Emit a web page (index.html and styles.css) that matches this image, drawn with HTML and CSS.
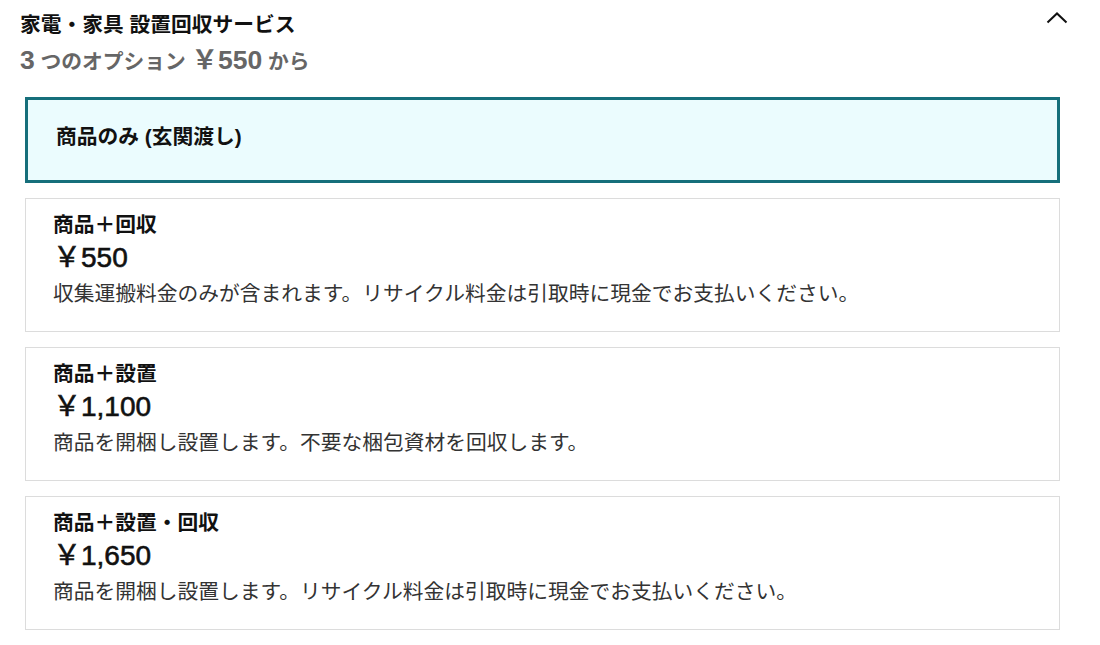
FILE: index.html
```html
<!DOCTYPE html>
<html lang="ja">
<head>
<meta charset="utf-8">
<link rel="stylesheet" href="styles.css">
</head>
<body>
<div class="panel">
  <div class="header">
    <div class="header-text">
      <div class="title">家電・家具 設置回収サービス</div>
      <div class="subtitle"><span class="num">3</span> つのオプション <span class="num">￥550</span> から</div>
    </div>
    <svg class="chevron" width="22" height="12" viewBox="0 0 22 12"><polyline points="1.5,10.5 11,1.5 20.5,10.5" fill="none" stroke="#111" stroke-width="2"/></svg>
  </div>
  <div class="options">
    <div class="option selected">
      <div class="opt-title">商品のみ (玄関渡し)</div>
    </div>
    <div class="option">
      <div class="opt-title">商品＋回収</div>
      <div class="price">￥550</div>
      <div class="desc">収集運搬料金のみが含まれます。リサイクル料金は引取時に現金でお支払いください。</div>
    </div>
    <div class="option">
      <div class="opt-title">商品＋設置</div>
      <div class="price">￥1,100</div>
      <div class="desc">商品を開梱し設置します。不要な梱包資材を回収します。</div>
    </div>
    <div class="option">
      <div class="opt-title">商品＋設置・回収</div>
      <div class="price">￥1,650</div>
      <div class="desc">商品を開梱し設置します。リサイクル料金は引取時に現金でお支払いください。</div>
    </div>
  </div>
</div>
</body>
</html>
```
FILE: styles.css
```css
html, body {
  margin: 0;
  padding: 0;
  background: #fff;
}
body {
  font-family: "Liberation Sans", "Noto Sans CJK JP", sans-serif;
  color: #111;
}
.panel {
  padding: 10px 32px 0 20px;
}
.header {
  display: flex;
  justify-content: space-between;
  align-items: flex-start;
}
.title {
  font-size: 20.75px;
  line-height: 30px;
  font-weight: 700;
  color: #111;
}
.subtitle {
  margin-top: 6px;
  font-size: 20.75px;
  line-height: 32px;
  height: 32px;
  font-weight: 700;
  color: #666;
}
.subtitle .num {
  font-size: 26.5px;
  line-height: 1;
}
.chevron {
  margin-top: 2px;
}
.options {
  margin: 19px 8px 0 5px;
  display: flex;
  flex-direction: column;
  gap: 15px;
}
.option {
  border: 1px solid #dcdcdc;
  padding: 11px 20px 19px 27px;
}
.option.selected {
  border: 3px solid #166f7b;
  background: #ebfcfe;
  padding: 23px 20px 29px 28px;
}
.opt-title {
  font-size: 20.75px;
  line-height: 30px;
  font-weight: 700;
  color: #111;
}
.selected .opt-title {
  line-height: 28px;
}
.price {
  font-size: 28px;
  line-height: 36px;
  height: 36px;
  font-weight: 400;
  -webkit-text-stroke: 0.6px #111;
  color: #111;
}
.desc {
  font-size: 20.75px;
  line-height: 36px;
  color: #333;
}
```
